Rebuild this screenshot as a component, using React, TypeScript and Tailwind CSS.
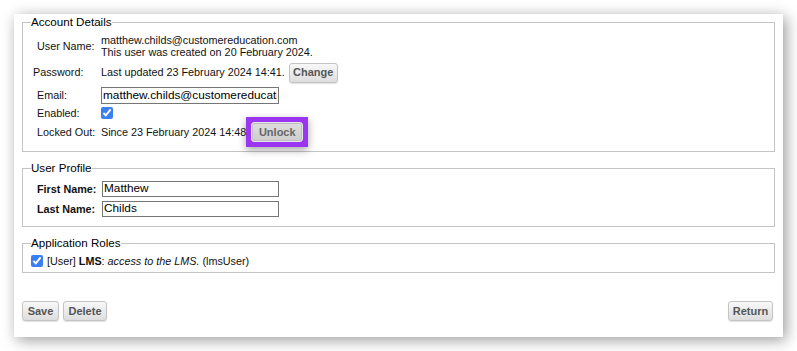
import React from 'react';

const font = { fontFamily: '"Liberation Sans", Arial, sans-serif' };

const Btn: React.FC<{ label: string; w: string; extra?: string }> = ({ label, w, extra = '' }) => (
    <button
        className={`${w} h-[20px] rounded-[3px] border border-[#c4c4c4] bg-gradient-to-b from-[#f8f8f8] to-[#dddddd] text-[11px] font-bold text-[#555] leading-none shadow-[0_1px_1px_rgba(0,0,0,0.12)] ${extra}`}
    >
        {label}
    </button>
);

export default function App() {
    return (
        <div className="w-[797px] h-[351px] bg-white pt-[14px] pl-[14px] text-[#111]" style={font}>
            <div className="w-[769px] h-[323px] bg-white px-[8px] pt-[1px] flex flex-col shadow-[3px_3px_14px_rgba(0,0,0,0.4)] text-[10.8px]">
                {/* Account Details */}
                <fieldset className="border border-[#c4c4c4] px-[8px] pb-[8px]">
                    <legend className="px-0 leading-[14px] text-[11.6px] text-black">Account Details</legend>
                    <div className="flex flex-col gap-[4px] pt-[5px]">
                        <div className="flex items-center h-[24px]">
                            <span className="w-[70px] pl-[6px]">User Name:</span>
                            <div className="flex flex-col leading-[12px]">
                                <span>matthew.childs@customereducation.com</span>
                                <span>This user was created on 20 February 2024.</span>
                            </div>
                        </div>
                        <div className="flex items-center h-[21px]">
                            <span className="w-[70px] pl-[2px]">Password:</span>
                            <span>Last updated 23 February 2024 14:41.</span>
                            <Btn label="Change" w="w-[49px]" extra="ml-[4px] h-[19px]" />
                        </div>
                        <div className="flex items-center h-[19px] -mt-[1px]">
                            <span className="w-[70px] pl-[6px]">Email:</span>
                            <input
                                className="w-[178px] h-[17px] border border-[#767676] px-[1px] text-[11.8px] text-black outline-none"
                                style={font}
                                defaultValue="matthew.childs@customereducation.com"
                            />
                        </div>
                        <div className="flex items-center h-[14px] -mt-[3px]">
                            <span className="w-[70px] pl-[6px]">Enabled:</span>
                            <input type="checkbox" defaultChecked className="w-[12px] h-[12px] m-0 accent-[#3a7ff2]" />
                        </div>
                        <div className="flex items-center h-[22px] -mt-[3px]">
                            <span className="w-[70px] pl-[6px]">Locked Out:</span>
                            <span>Since 23 February 2024 14:48</span>
                            <span className="ml-[0px] p-[5px] bg-[#9a35f2] shadow-[0_3px_8px_rgba(0,0,0,0.35)] flex">
                                <button className="w-[52px] h-[20px] rounded-[3px] border border-[#e8e8e8] bg-gradient-to-b from-[#dedede] to-[#cdcdcd] text-[11px] font-bold text-[#666] leading-none shadow-[inset_0_0_0_1px_#bdbdbd]">
                                    Unlock
                                </button>
                            </span>
                        </div>
                    </div>
                </fieldset>

                {/* User Profile */}
                <fieldset className="mt-[9px] border border-[#c4c4c4] px-[8px] pb-[9px]">
                    <legend className="px-0 leading-[14px] text-[11.6px] text-black">User Profile</legend>
                    <div className="flex flex-col gap-[4px] pt-[6px]">
                        <div className="flex items-center h-[16px]">
                            <span className="w-[71px] pl-[6px] font-bold">First Name:</span>
                            <input
                                className="w-[177px] h-[16px] border border-[#767676] px-[1px] text-[11.8px] text-black outline-none"
                                style={font}
                                defaultValue="Matthew"
                            />
                        </div>
                        <div className="flex items-center h-[16px]">
                            <span className="w-[71px] pl-[6px] font-bold">Last Name:</span>
                            <input
                                className="w-[177px] h-[16px] border border-[#767676] px-[1px] text-[11.8px] text-black outline-none"
                                style={font}
                                defaultValue="Childs"
                            />
                        </div>
                    </div>
                </fieldset>

                {/* Application Roles */}
                <fieldset className="mt-[9px] border border-[#c4c4c4] px-[8px] pb-[4px]">
                    <legend className="px-0 leading-[14px] text-[11.6px] text-black">Application Roles</legend>
                    <div className="flex items-center h-[14px] mt-[4px]">
                        <input type="checkbox" defaultChecked className="w-[12px] h-[12px] m-0 accent-[#3a7ff2]" />
                        <span className="ml-[4px]">
                            [User] <b>LMS</b>: <i>access to the LMS.</i> (lmsUser)
                        </span>
                    </div>
                </fieldset>

                <div className="mt-[28px] flex items-center">
                    <Btn label="Save" w="w-[37px]" />
                    <Btn label="Delete" w="w-[44px]" extra="ml-[4px]" />
                    <div className="flex-1" />
                    <Btn label="Return" w="w-[45px]" extra="mr-[2px]" />
                </div>
            </div>
        </div>
    );
}
